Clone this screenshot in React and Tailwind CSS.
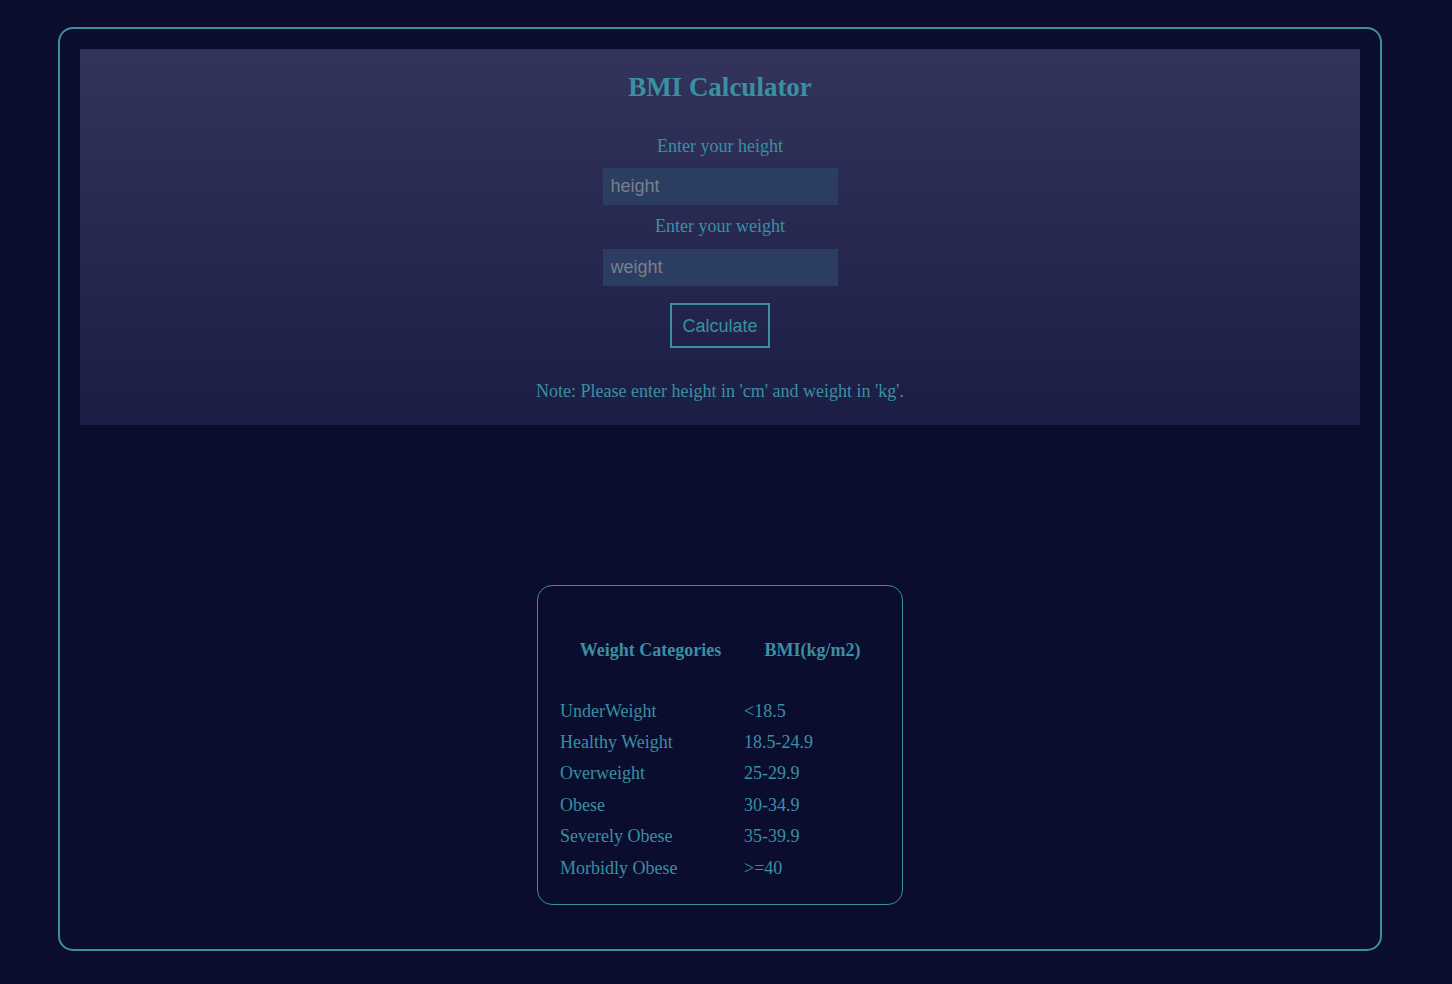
import React, { useState } from 'react';

const categories = [
  ['UnderWeight', '<18.5'],
  ['Healthy Weight', '18.5-24.9'],
  ['Overweight', '25-29.9'],
  ['Obese', '30-34.9'],
  ['Severely Obese', '35-39.9'],
  ['Morbidly Obese', '>=40'],
];

export default function App() {
  const [height, setHeight] = useState('');
  const [weight, setWeight] = useState('');

  return (
    <div className="min-h-screen bg-[#0b0d2e] pt-[27px] pb-[34px] font-['Liberation_Serif',serif] text-[#3a8fa3]">
      <div className="ml-[58px] w-[1324px] h-[924px] border-2 border-[#3a8fa3] rounded-[15px] p-5">
        {/* Calculator panel */}
        <div className="h-[376px] bg-gradient-to-b from-[#33345b] to-[#1c1d45] flex flex-col items-center">
          <h1 className="mt-[22px] text-[27px] font-bold leading-[32px]">BMI Calculator</h1>
          <label className="mt-[33px] text-lg leading-[20px]">Enter your height</label>
          <input
            value={height}
            onChange={(e) => setHeight(e.target.value)}
            placeholder="height"
            className="mt-[12px] w-[235px] h-[37px] bg-[#2b3d60] px-2 font-['Liberation_Sans',sans-serif] text-lg text-[#9aa7b8] placeholder:text-[#7d7f8c] outline-none"
          />
          <label className="mt-[11px] text-lg leading-[20px]">Enter your weight</label>
          <input
            value={weight}
            onChange={(e) => setWeight(e.target.value)}
            placeholder="weight"
            className="mt-[13px] w-[235px] h-[37px] bg-[#2b3d60] px-2 font-['Liberation_Sans',sans-serif] text-lg text-[#9aa7b8] placeholder:text-[#7d7f8c] outline-none"
          />
          <button className="mt-[17px] w-[100px] h-[45px] border-2 border-[#3a8fa3] font-['Liberation_Sans',sans-serif] text-lg text-[#3a8fa3]">
            Calculate
          </button>
          <p className="mt-[33px] text-lg leading-[20px]">Note: Please enter height in 'cm' and weight in 'kg'.</p>
        </div>

        {/* Categories table */}
        <div className="mt-[160px] mx-auto w-[366px] h-[320px] border border-[#3a8fa3] rounded-[15px] px-[22px] pt-[52px]">
          <div className="flex text-lg font-bold leading-[24px]">
            <div className="w-[182px] text-center">Weight Categories</div>
            <div className="w-[140px] text-center pl-[4px]">BMI(kg/m2)</div>
          </div>
          <div className="mt-[33px] text-lg">
            {categories.map(([name, range]) => (
              <div key={name} className="flex h-[31.4px] items-center">
                <div className="w-[184px]">{name}</div>
                <div>{range}</div>
              </div>
            ))}
          </div>
        </div>
      </div>
    </div>
  );
}
